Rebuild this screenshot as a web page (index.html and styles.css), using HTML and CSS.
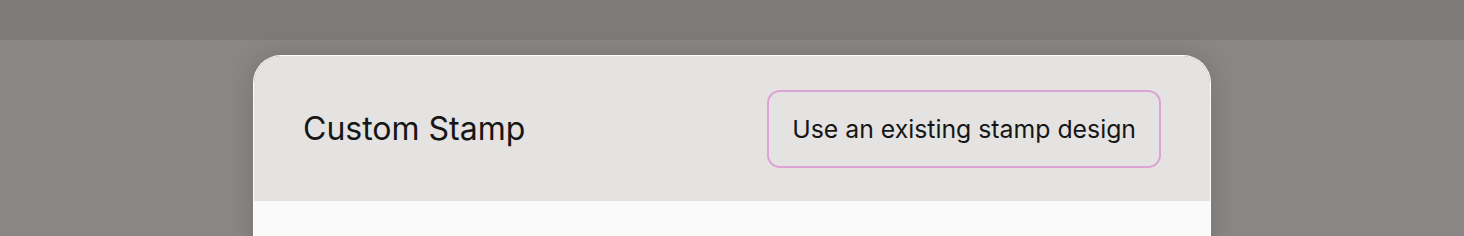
FILE: index.html
```html
<!DOCTYPE html>
<html lang="en">
<head>
  <meta charset="UTF-8" />
  <title>Custom Stamp</title>
  <link rel="stylesheet" href="styles.css">
</head>
<body>
  <div class="topbar"></div>
  <div class="backdrop">
    <div class="modal">
      <div class="modal-header">
        <h2>Custom Stamp</h2>
        <button class="existing-btn">Use an existing stamp design</button>
      </div>
      <div class="modal-body"></div>
    </div>
  </div>
</body>
</html>
```

FILE: styles.css
```css
* {
  margin: 0;
  padding: 0;
  box-sizing: border-box;
}

body {
  background-color: #8a8685;
  font-family: 'Inter', 'Noto Sans', sans-serif;
  color: #161616;
  height: 236px;
  overflow: hidden;
}

.topbar {
  height: 40px;
  background-color: #7e7a79;
}

.backdrop {
  padding-top: 15px;
  display: flex;
  justify-content: center;
}

.modal {
  width: 958px;
  border: 1px solid #ffffff;
  border-bottom: none;
  border-radius: 28px 28px 0 0;
  overflow: hidden;
  box-shadow: 0 0 24px rgba(0, 0, 0, 0.15);
}

.modal-header {
  display: flex;
  justify-content: space-between;
  align-items: center;
  height: 145px;
  padding: 0 49px;
  background-color: #e4e3e2;
}
.modal-header h2 {
  font-size: 32px;
  font-weight: 400;
  color: #161616;
}

.existing-btn {
  height: 78px;
  padding: 0 23px;
  border: 2px solid #dda3d3;
  border-radius: 13px;
  background: transparent;
  font-family: inherit;
  font-size: 24.8px;
  color: #161616;
}

.modal-body {
  height: 60px;
  background-color: #fafafa;
}
```
